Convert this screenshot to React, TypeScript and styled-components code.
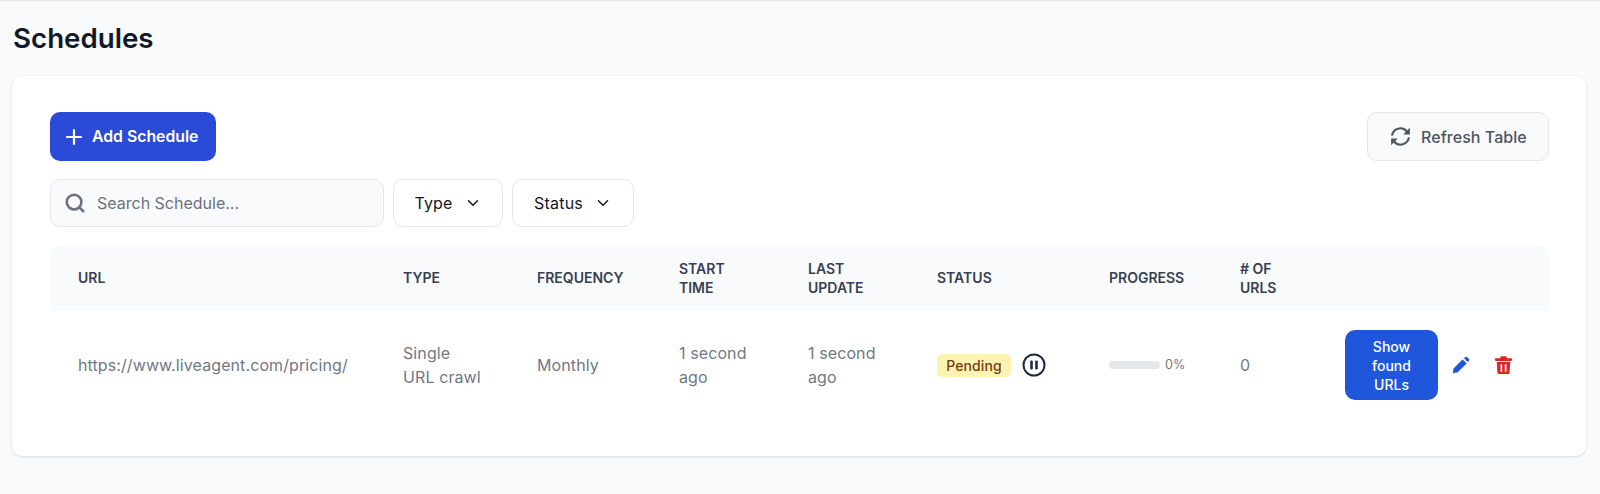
import React from 'react'
import styled, { createGlobalStyle } from 'styled-components'
import { Plus, ChevronDown, Search } from 'lucide-react'

const GlobalStyle = createGlobalStyle`
  html, body {
    margin: 0;
    background: #f9fafb;
    font-family: Inter, "Liberation Sans", sans-serif;
  }
  * { box-sizing: border-box; }
`

const COLUMNS = '325px 134px 142px 129px 129px 172px 131px 105px 232px'

const Page = styled.main`
  height: 494px;
  border-top: 1px solid #e5e7eb;
  padding: 0 14px 0 12px;
`

const Title = styled.h1`
  margin: 0;
  padding: 18px 0 19px 1px;
  height: 75px;
  font-size: 27.7px;
  line-height: 38px;
  font-weight: 600;
  color: #111827;
`

const Card = styled.section`
  background: #fff;
  border-radius: 10px;
  box-shadow: 0 1px 3px rgba(0, 0, 0, 0.12);
  padding: 36px 37px 37px 38px;
`

const TopBar = styled.div`
  display: flex;
  justify-content: space-between;
  align-items: stretch;
  height: 49px;
`

const AddButton = styled.button`
  display: flex;
  align-items: center;
  gap: 6px;
  width: 166px;
  padding: 0 0 0 12px;
  border: none;
  border-radius: 10px;
  background: #2a4bd7;
  color: #fff;
  font: 600 15.8px Inter, sans-serif;
`

const RefreshButton = styled.button`
  display: flex;
  align-items: center;
  gap: 9px;
  width: 182px;
  padding: 0 0 0 21px;
  border: 1px solid #e5e7eb;
  border-radius: 10px;
  background: #f9fafb;
  color: #4b5563;
  font: 500 16px Inter, sans-serif;
  letter-spacing: 0.05px;
`

const Filters = styled.div`
  display: flex;
  gap: 9px;
  margin-top: 18px;
  height: 48px;
`

const SearchBox = styled.div`
  display: flex;
  align-items: center;
  gap: 11px;
  width: 334px;
  padding-left: 13px;
  border: 1px solid #e5e7eb;
  border-radius: 10px;
  background: #f9fafb;
  color: #6b7280;
  font-size: 16px;
`

const FilterButton = styled.button<{ $width: number }>`
  display: flex;
  align-items: center;
  justify-content: center;
  gap: 11px;
  width: ${p => p.$width}px;
  border: 1px solid #e5e7eb;
  border-radius: 10px;
  background: #fff;
  color: #111827;
  font: 400 16px Inter, sans-serif;
  letter-spacing: 0.2px;
`

const HeadRow = styled.div`
  display: grid;
  grid-template-columns: ${COLUMNS};
  align-items: center;
  height: 65px;
  margin-top: 19px;
  padding-bottom: 2px;
  border-radius: 10px 10px 0 0;
  background: #f9fafb;
`

const HeadCell = styled.div`
  padding: 0 26px 0 28px;
  font-size: 14px;
  line-height: 19px;
  font-weight: 600;
  color: #374151;
  text-transform: uppercase;
`

const BodyRow = styled.div`
  display: grid;
  grid-template-columns: ${COLUMNS};
  align-items: center;
  height: 108px;
`

const Cell = styled.div`
  padding: 0 26px 0 28px;
  font-size: 16px;
  line-height: 24px;
  letter-spacing: 0.1px;
  color: #727883;
`

const InlineCell = styled(Cell)`
  display: flex;
  align-items: center;
`

const Badge = styled.span`
  display: block;
  width: 74px;
  height: 23px;
  border-radius: 5px;
  background: #fdf3b0;
  color: #723b13;
  font-size: 14px;
  font-weight: 500;
  line-height: 23px;
  text-align: center;
`

const PauseButton = styled.span`
  display: flex;
  margin-left: 11px;
  color: #1f2a44;
`

const ProgressTrack = styled.span`
  display: block;
  flex: none;
  width: 51px;
  height: 8px;
  border-radius: 4px;
  background: #e5e7eb;
`

const ProgressLabel = styled.span`
  margin-left: 5px;
  font-size: 12.5px;
  line-height: 16px;
`

const ActionsCell = styled(Cell)`
  display: flex;
  align-items: center;
  padding-right: 0;
`

const FoundButton = styled.button`
  width: 93px;
  height: 70px;
  padding: 0 14px;
  border: none;
  border-radius: 10px;
  background: #1f56db;
  color: #fff;
  font: 500 14px/19px Inter, sans-serif;
`

const IconButton = styled.span<{ $color: string; $gap: number }>`
  display: flex;
  margin-left: ${p => p.$gap}px;
  color: ${p => p.$color};
`

const PauseIcon = () => (
  <svg width="24" height="24" viewBox="0 0 24 24" fill="none">
    <circle cx="12" cy="12" r="10.5" stroke="currentColor" strokeWidth="2" />
    <rect x="8.2" y="7.6" width="2.6" height="8.8" rx="1" fill="currentColor" />
    <rect x="13.2" y="7.6" width="2.6" height="8.8" rx="1" fill="currentColor" />
  </svg>
)

const RefreshIcon = () => (
  <svg width="23" height="23" viewBox="0 0 24 24" fill="none">
    <path d="M3.2 11A8.8 8.8 0 0 1 18.5 6.5" stroke="currentColor" strokeWidth="2.2" />
    <path d="M20.8 13A8.8 8.8 0 0 1 5.5 17.5" stroke="currentColor" strokeWidth="2.2" />
    <path d="M21.8 2.8V9.8H14.8Z" fill="currentColor" />
    <path d="M2.2 21.2V14.2H9.2Z" fill="currentColor" />
  </svg>
)

const PenIcon = () => (
  <svg width="18" height="18" viewBox="0 0 18 18" fill="currentColor">
    <path d="M1 17l.9-4.6L10.6 3.7l3.7 3.7-8.7 8.7z" stroke="currentColor" strokeLinejoin="round" strokeWidth="0.6" />
    <path d="M12 2.3l1.1-1.1a1.6 1.6 0 0 1 2.2 0l1.5 1.5a1.6 1.6 0 0 1 0 2.2L15.7 6z" />
  </svg>
)

const TrashIcon = () => (
  <svg width="19" height="20" viewBox="0 0 18 18" fill="currentColor">
    <path d="M6.5.6h5l.8 2H16a.9.9 0 0 1 0 2.6H2a.9.9 0 0 1 0-2.6h3.7z" />
    <path
      fillRule="evenodd"
      d="M2.6 6.2h12.8l-.7 10.2a1.3 1.3 0 0 1-1.3 1.2H4.6a1.3 1.3 0 0 1-1.3-1.2zM6.2 8.2v7.2h1.6V8.2zm4 0v7.2h1.6V8.2z"
    />
  </svg>
)

const headers = ['URL', 'Type', 'Frequency', 'Start Time', 'Last Update', 'Status', 'Progress', '# of URLs', '']

export default function App() {
  return (
    <Page>
      <GlobalStyle />
      <Title>Schedules</Title>
      <Card>
        <TopBar>
          <AddButton>
            <Plus size={24} strokeWidth={2.2} />
            Add Schedule
          </AddButton>
          <RefreshButton>
            <RefreshIcon />
            Refresh Table
          </RefreshButton>
        </TopBar>
        <Filters>
          <SearchBox>
            <Search size={22} strokeWidth={2.8} />
            Search Schedule...
          </SearchBox>
          <FilterButton $width={110}>
            Type <ChevronDown size={18} />
          </FilterButton>
          <FilterButton $width={122}>
            Status <ChevronDown size={18} />
          </FilterButton>
        </Filters>
        <HeadRow>
          {headers.map(h => <HeadCell key={h}>{h}</HeadCell>)}
        </HeadRow>
        <BodyRow>
          <Cell>https://www.liveagent.com/pricing/</Cell>
          <Cell>Single URL crawl</Cell>
          <Cell>Monthly</Cell>
          <Cell>1 second ago</Cell>
          <Cell>1 second ago</Cell>
          <InlineCell>
            <Badge>Pending</Badge>
            <PauseButton><PauseIcon /></PauseButton>
          </InlineCell>
          <InlineCell>
            <ProgressTrack />
            <ProgressLabel>0%</ProgressLabel>
          </InlineCell>
          <Cell>0</Cell>
          <ActionsCell>
            <FoundButton>Show found URLs</FoundButton>
            <IconButton $color="#1f56db" $gap={14}><PenIcon /></IconButton>
            <IconButton $color="#e02424" $gap={24}><TrashIcon /></IconButton>
          </ActionsCell>
        </BodyRow>
      </Card>
    </Page>
  )
}
